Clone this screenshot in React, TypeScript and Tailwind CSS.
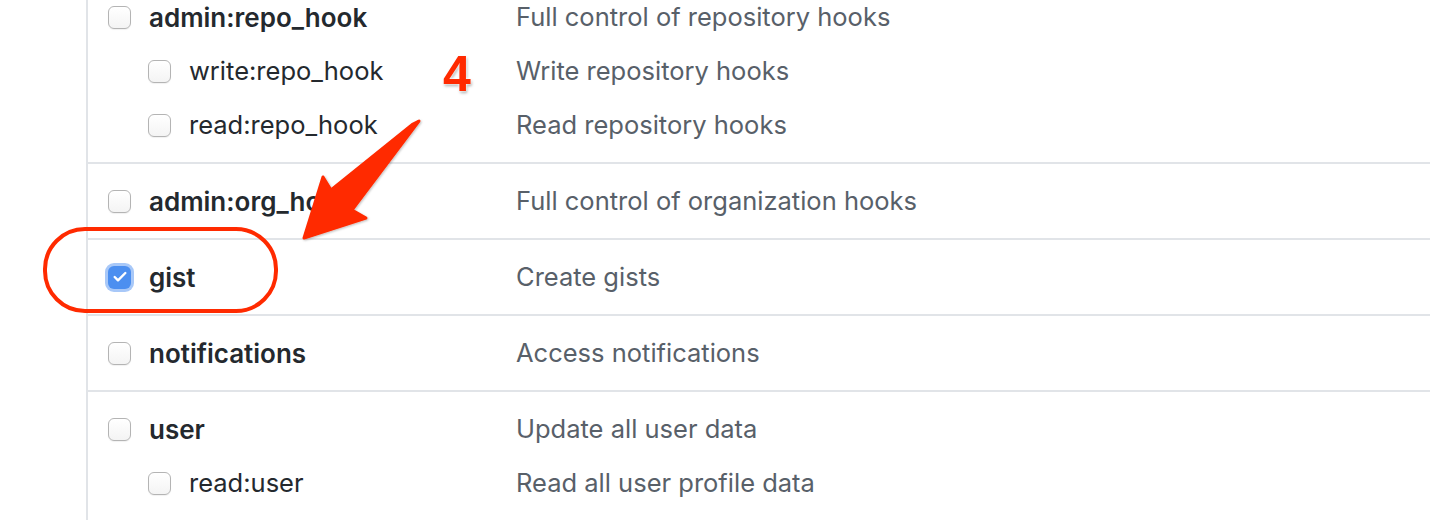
import { Check } from "lucide-react";

interface Scope {
  name: string;
  description: string;
  checked?: boolean;
  children?: Scope[];
}

const scopes: Scope[] = [
  {
    name: "admin:repo_hook",
    description: "Full control of repository hooks",
    children: [
      { name: "write:repo_hook", description: "Write repository hooks" },
      { name: "read:repo_hook", description: "Read repository hooks" },
    ],
  },
  { name: "admin:org_hook", description: "Full control of organization hooks" },
  { name: "gist", description: "Create gists", checked: true },
  { name: "notifications", description: "Access notifications" },
  {
    name: "user",
    description: "Update all user data",
    children: [{ name: "read:user", description: "Read all user profile data" }],
  },
];

const Checkbox = ({ checked }: { checked?: boolean }) => {
  if (checked) {
    return (
      <span className="flex h-[23px] w-[23px] shrink-0 items-center justify-center rounded-[6px] bg-[#4c8ff0] shadow-[0_0_0_3px_#a8c8f8]">
        <Check className="h-[16px] w-[16px] text-white" strokeWidth={3.6} />
      </span>
    );
  }
  return (
    <span className="block h-[23px] w-[23px] shrink-0 rounded-[6px] border border-[#b4b4b4] bg-gradient-to-b from-white to-[#f4f4f4] shadow-[0_1px_1px_rgba(0,0,0,0.06)]" />
  );
};

const ScopeRow = ({ scope, sub }: { scope: Scope; sub?: boolean }) => (
  <div className="flex h-[54px] items-center">
    <div className={`flex w-[408px] items-center gap-[18px] ${sub ? "pl-[40px]" : ""}`}>
      <Checkbox checked={scope.checked} />
      <span
        className={
          sub ? "text-[#24292e]" : "text-[26px] font-semibold text-[#24292e]"
        }
      >
        {scope.name}
      </span>
    </div>
    <span className="text-[#586069]">{scope.description}</span>
  </div>
);

export default function App() {
  return (
    <div className="relative h-[522px] w-[1430px] overflow-hidden bg-white font-['Inter',sans-serif] text-[25.5px]">
      <div className="ml-[86px] -mt-[22px] border-l-2 border-[#e1e4e8]">
        {scopes.map((scope) => (
          <div key={scope.name} className="border-t-2 border-[#e1e4e8] py-[10px] pl-[20px]">
            <ScopeRow scope={scope} />
            {scope.children?.map((child) => (
              <ScopeRow key={child.name} scope={child} sub />
            ))}
          </div>
        ))}
      </div>

      {/* annotation overlay */}
      <div className="absolute left-[43px] top-[227px] h-[86px] w-[235px] rounded-[42px] border-[4px] border-[#ff2a00]" />
      <span className="absolute left-[443px] top-[49px] font-['Liberation_Sans',sans-serif] text-[50px] font-bold leading-none text-[#ff2a00] [text-shadow:0_0_2px_#fff,0_0_3px_#fff,1px_2px_3px_rgba(0,0,0,0.35)]">
        4
      </span>
      <svg className="absolute left-0 top-0" width="1430" height="522" viewBox="0 0 1430 522">
        <defs>
          <filter id="sh" x="-20%" y="-20%" width="140%" height="140%">
            <feDropShadow dx="1" dy="1" stdDeviation="1.2" floodColor="#000" floodOpacity="0.25" />
          </filter>
        </defs>
        <polygon
          points="419,121 352,210 366,218 304,238 323,177 331,190 413,124"
          fill="#ff2a00"
          stroke="#ff2a00"
          strokeWidth="3"
          strokeLinejoin="round"
          filter="url(#sh)"
        />
      </svg>
    </div>
  );
}
